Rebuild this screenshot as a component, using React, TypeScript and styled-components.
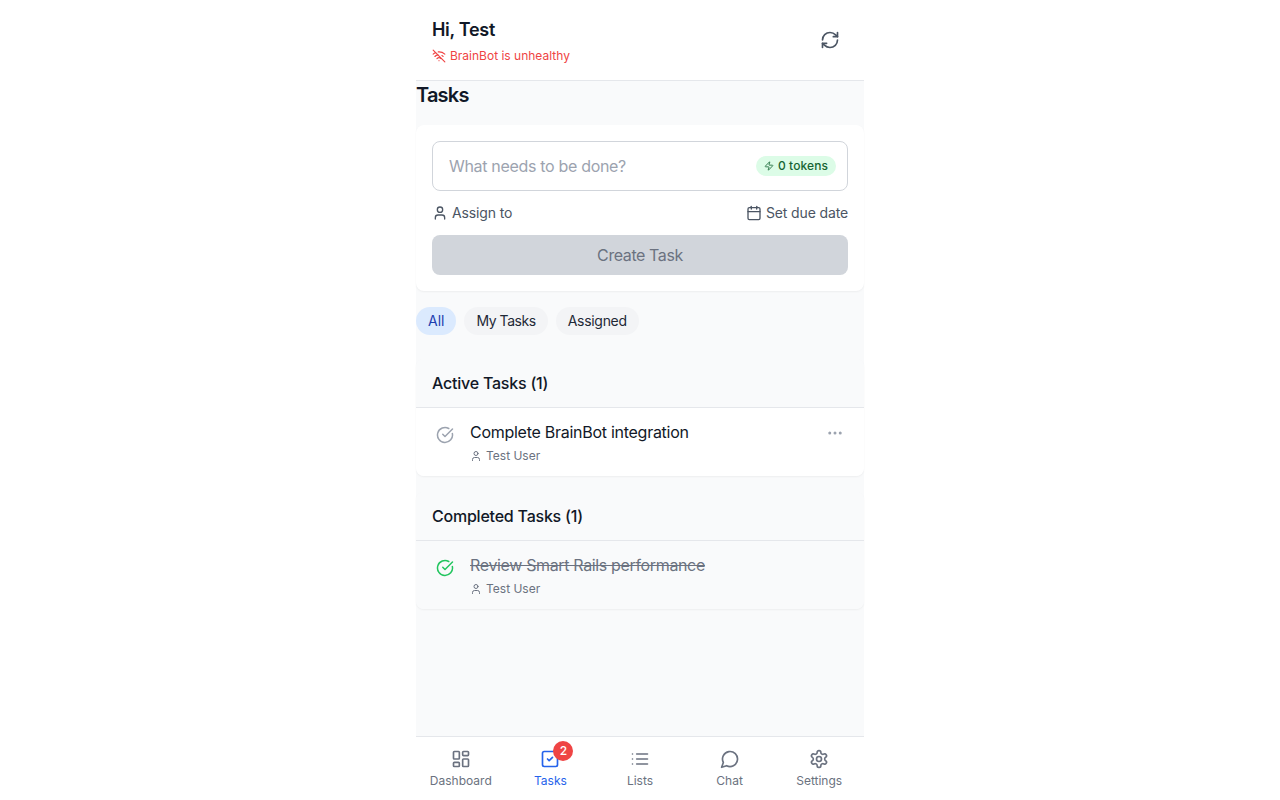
import React from "react";
import styled, { createGlobalStyle, css } from "styled-components";
import {
  Calendar,
  CircleCheckBig,
  Ellipsis,
  LayoutDashboard,
  RefreshCw,
  SquareCheck,
  User,
  WifiOff,
  Zap,
} from "lucide-react";

const GlobalStyle = createGlobalStyle`
  *, *::before, *::after { box-sizing: border-box; }
  body {
    margin: 0;
    background: #ffffff;
    font-family: Inter, "Liberation Sans", sans-serif;
    color: #111827;
  }
  h1, h2, h3, p { margin: 0; }
  button, input { font: inherit; color: inherit; }
  svg { display: block; flex-shrink: 0; }
`;

const Shell = styled.div`
  width: 448px;
  height: 100vh;
  margin: 0 auto;
  display: flex;
  flex-direction: column;
  background: #f9fafb;
`;

const Header = styled.header`
  display: flex;
  align-items: center;
  justify-content: space-between;
  padding: 16px;
  background: #ffffff;
  border-bottom: 1px solid #e5e7eb;
`;

const Greeting = styled.h1`
  font-size: 18px;
  line-height: 28px;
  font-weight: 600;
  letter-spacing: -0.3px;
`;

const Status = styled.p`
  display: flex;
  align-items: center;
  gap: 4px;
  margin-top: 4px;
  font-size: 12px;
  line-height: 16px;
  color: #ef4444;
`;

const IconButton = styled.button<{ $pad: number; $tone: string; $top?: number }>`
  display: flex;
  flex-shrink: 0;
  align-self: ${(p) => (p.$top === undefined ? "center" : "flex-start")};
  margin: ${(p) => p.$top ?? 0}px 0 0;
  padding: ${(p) => p.$pad}px;
  border: 0;
  background: none;
  color: ${(p) => p.$tone};
`;

const Main = styled.main`
  flex: 1;
  min-height: 0;
  display: flex;
  flex-direction: column;
`;

const PageTitle = styled.h2`
  margin-bottom: 16px;
  font-size: 20px;
  line-height: 28px;
  font-weight: 600;
  letter-spacing: -0.8px;
`;

const cardShadow = css`
  border-radius: 8px;
  box-shadow: 0 1px 2px rgba(0, 0, 0, 0.05);
`;

const Composer = styled.form`
  ${cardShadow}
  display: flex;
  flex-direction: column;
  gap: 12px;
  padding: 16px;
  background: #ffffff;
`;

const Field = styled.div`
  display: flex;
  align-items: center;
  height: 50px;
  padding: 0 11px 0 16px;
  border: 1px solid #d1d5db;
  border-radius: 8px;
`;

const FieldInput = styled.input`
  flex: 1;
  min-width: 0;
  padding: 0;
  border: 0;
  outline: 0;
  background: none;
  font-size: 16px;
  line-height: 24px;
  letter-spacing: -0.32px;
  &::placeholder { color: #9ca3af; opacity: 1; }
`;

const TokenPill = styled.span`
  display: flex;
  align-items: center;
  gap: 4px;
  padding: 2px 8px;
  border-radius: 999px;
  background: #dcfce7;
  color: #166534;
  font-size: 12px;
  line-height: 16px;
  font-weight: 500;
  letter-spacing: 0.08px;
`;

const Options = styled.div`
  display: flex;
  justify-content: space-between;
`;

const Option = styled.button`
  display: flex;
  align-items: center;
  gap: 4px;
  padding: 0;
  border: 0;
  background: none;
  font-size: 14px;
  line-height: 20px;
  letter-spacing: -0.13px;
  color: #4b5563;
`;

const CreateButton = styled.button`
  height: 40px;
  border: 0;
  border-radius: 8px;
  background: #d1d5db;
  color: #6b7280;
  font-size: 16px;
  line-height: 24px;
  letter-spacing: -0.4px;
`;

const Filters = styled.div`
  display: flex;
  gap: 8px;
  margin: 16px 0 24px;
`;

const Chip = styled.button<{ $active?: boolean; $tracking?: number }>`
  padding: 4px 12px;
  border: 0;
  border-radius: 999px;
  background: ${(p) => (p.$active ? "#dbeafe" : "#f3f4f6")};
  color: ${(p) => (p.$active ? "#1e40af" : "#1f2937")};
  font-size: 14px;
  line-height: 20px;
  letter-spacing: ${(p) => p.$tracking ?? 0}px;
`;

const Section = styled.section`
  ${cardShadow}
  overflow: hidden;
  margin-bottom: 16px;
`;

const SectionTitle = styled.h3`
  padding: 12px 16px;
  border-bottom: 1px solid #e5e7eb;
  background: #f9fafb;
  font-size: 16px;
  line-height: 24px;
  font-weight: 500;
  letter-spacing: -0.22px;
`;

const TaskRow = styled.div<{ $done?: boolean }>`
  display: flex;
  align-items: flex-start;
  padding: 12px 16px;
  background: ${(p) => (p.$done ? "#f9fafb" : "#ffffff")};
`;

const TaskBody = styled.div`
  flex: 1;
  margin-left: 12px;
`;

const TaskTitle = styled.p<{ $done?: boolean }>`
  font-size: 16px;
  line-height: 24px;
  letter-spacing: ${(p) => (p.$done ? "-0.35px" : "-0.27px")};
  color: ${(p) => (p.$done ? "#6b7280" : "#111827")};
  text-decoration: ${(p) => (p.$done ? "line-through" : "none")};
`;

const Assignee = styled.p`
  display: flex;
  align-items: center;
  gap: 4px;
  margin-top: 4px;
  font-size: 12px;
  line-height: 16px;
  color: #6b7280;
`;

const Nav = styled.nav`
  display: grid;
  grid-template-columns: repeat(5, 1fr);
  height: 64px;
  border-top: 1px solid #e5e7eb;
  background: #ffffff;
`;

const NavItem = styled.a<{ $active?: boolean }>`
  display: flex;
  flex-direction: column;
  align-items: center;
  gap: 4px;
  padding-top: 12px;
  font-size: 12px;
  line-height: 16px;
  color: ${(p) => (p.$active ? "#2563eb" : "#6b7280")};
`;

const NavIcon = styled.span`
  position: relative;
`;

const Badge = styled.span`
  position: absolute;
  top: -8px;
  left: 13px;
  width: 20px;
  height: 20px;
  border-radius: 50%;
  background: #ef4444;
  color: #ffffff;
  font-size: 12px;
  font-weight: 500;
  line-height: 20px;
  text-align: center;
`;

type IconProps = { size: number };

function Glyph({ size, children }: IconProps & { children: React.ReactNode }) {
  return (
    <svg
      width={size}
      height={size}
      viewBox="0 0 24 24"
      fill="none"
      stroke="currentColor"
      strokeWidth={2}
      strokeLinecap="round"
      strokeLinejoin="round"
    >
      {children}
    </svg>
  );
}

function ListIcon({ size }: IconProps) {
  return (
    <Glyph size={size}>
      <path d="M8 6h13M8 12h13M8 18h13M3 6h.01M3 12h.01M3 18h.01" />
    </Glyph>
  );
}

function ChatIcon({ size }: IconProps) {
  return (
    <Glyph size={size}>
      <path d="M7.9 20A9 9 0 1 0 4 16.1L2 22Z" />
    </Glyph>
  );
}

function GearIcon({ size }: IconProps) {
  return (
    <Glyph size={size}>
      <path d="M12.22 2h-.44a2 2 0 0 0-2 2v.18a2 2 0 0 1-1 1.73l-.43.25a2 2 0 0 1-2 0l-.15-.08a2 2 0 0 0-2.73.73l-.22.38a2 2 0 0 0 .73 2.73l.15.1a2 2 0 0 1 1 1.72v.51a2 2 0 0 1-1 1.74l-.15.09a2 2 0 0 0-.73 2.73l.22.38a2 2 0 0 0 2.73.73l.15-.08a2 2 0 0 1 2 0l.43.25a2 2 0 0 1 1 1.73V20a2 2 0 0 0 2 2h.44a2 2 0 0 0 2-2v-.18a2 2 0 0 1 1-1.73l.43-.25a2 2 0 0 1 2 0l.15.08a2 2 0 0 0 2.73-.73l.22-.39a2 2 0 0 0-.73-2.73l-.15-.08a2 2 0 0 1-1-1.74v-.5a2 2 0 0 1 1-1.74l.15-.09a2 2 0 0 0 .73-2.73l-.22-.38a2 2 0 0 0-2.73-.73l-.15.08a2 2 0 0 1-2 0l-.43-.25a2 2 0 0 1-1-1.73V4a2 2 0 0 0-2-2z" />
      <circle cx="12" cy="12" r="3" />
    </Glyph>
  );
}

const NAV = [
  { label: "Dashboard", icon: LayoutDashboard },
  { label: "Tasks", icon: SquareCheck, active: true, badge: 2 },
  { label: "Lists", icon: ListIcon },
  { label: "Chat", icon: ChatIcon },
  { label: "Settings", icon: GearIcon },
];

type TaskProps = { title: string; assignee: string; done?: boolean };

function Task({ title, assignee, done }: TaskProps) {
  return (
    <TaskRow $done={done}>
      <IconButton $pad={4} $top={2} $tone={done ? "#22c55e" : "#9ca3af"} aria-label="Toggle task">
        <CircleCheckBig size={18} />
      </IconButton>
      <TaskBody>
        <TaskTitle $done={done}>{title}</TaskTitle>
        <Assignee>
          <User size={12} />
          <span>{assignee}</span>
        </Assignee>
      </TaskBody>
      {!done && (
        <IconButton $pad={4} $top={0} $tone="#9ca3af" aria-label="More">
          <Ellipsis size={18} />
        </IconButton>
      )}
    </TaskRow>
  );
}

export default function App() {
  return (
    <>
      <GlobalStyle />
      <Shell>
        <Header>
          <div>
            <Greeting>Hi, Test</Greeting>
            <Status>
              <WifiOff size={14} />
              <span>BrainBot is unhealthy</span>
            </Status>
          </div>
          <IconButton $pad={8} $tone="#4b5563" aria-label="Refresh">
            <RefreshCw size={20} />
          </IconButton>
        </Header>
        <Main>
          <PageTitle>Tasks</PageTitle>
          <Composer>
            <Field>
              <FieldInput placeholder="What needs to be done?" />
              <TokenPill>
                <Zap size={10} />
                <span>0 tokens</span>
              </TokenPill>
            </Field>
            <Options>
              <Option type="button">
                <User size={16} />
                <span>Assign to</span>
              </Option>
              <Option type="button">
                <Calendar size={16} />
                <span>Set due date</span>
              </Option>
            </Options>
            <CreateButton type="button">Create Task</CreateButton>
          </Composer>
          <Filters>
            <Chip $active>All</Chip>
            <Chip $tracking={-0.45}>My Tasks</Chip>
            <Chip $tracking={-0.3}>Assigned</Chip>
          </Filters>
          <Section>
            <SectionTitle>Active Tasks (1)</SectionTitle>
            <Task title="Complete BrainBot integration" assignee="Test User" />
          </Section>
          <Section>
            <SectionTitle>Completed Tasks (1)</SectionTitle>
            <Task title="Review Smart Rails performance" assignee="Test User" done />
          </Section>
        </Main>
        <Nav>
          {NAV.map(({ label, icon: Icon, active, badge }) => (
            <NavItem key={label} $active={active}>
              <NavIcon>
                <Icon size={20} />
                {badge && <Badge>{badge}</Badge>}
              </NavIcon>
              <span>{label}</span>
            </NavItem>
          ))}
        </Nav>
      </Shell>
    </>
  );
}
